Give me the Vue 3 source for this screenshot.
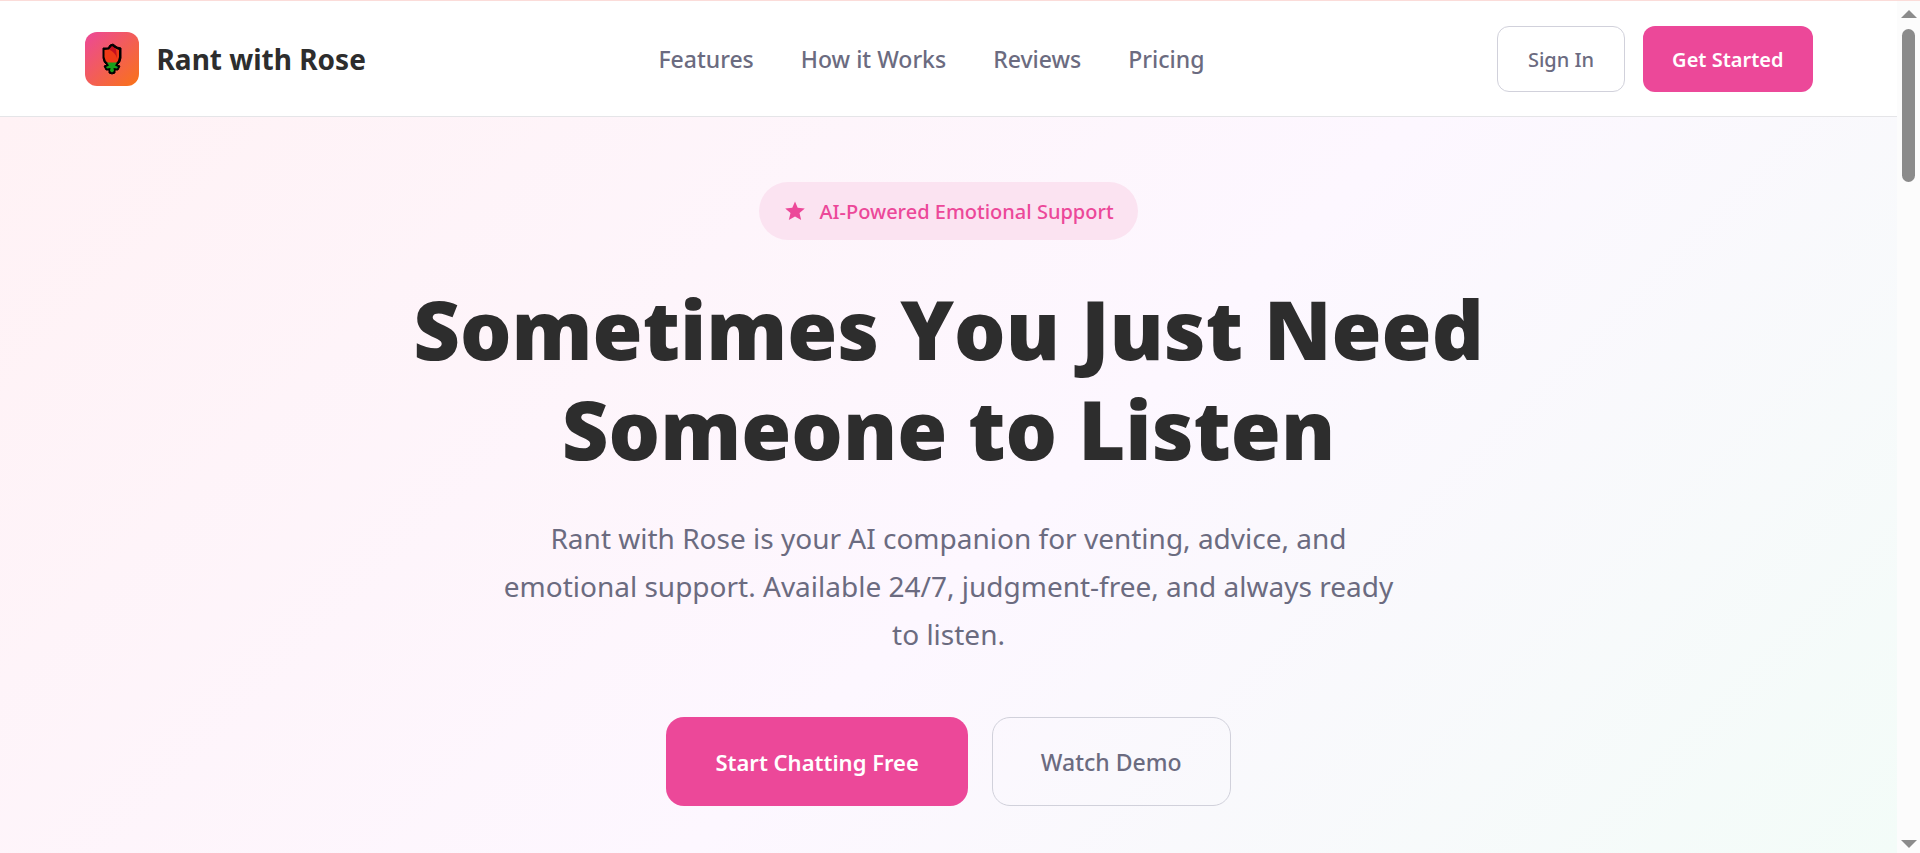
<script setup>
const links = ['Features', 'How it Works', 'Reviews', 'Pricing']
</script>

<template>
  <div class="window">
    <div class="page">
      <header class="header">
        <div class="bar">
          <a class="brand" href="#">
            <span class="logo">
              <svg width="20" height="32" viewBox="0 0 20 32" aria-hidden="true">
                <path d="M1 5 L6 5 L8 2 L11 1 L15 4 L19 5 L19 15 Q18.500 20 15 22 L18 23 L16 27 L13 27 L13 30 L10 31 L7 30 L7 27 L4 27 L2 23 L5 22 Q1.500 20 1 15 Z" fill="#000" stroke="#000" stroke-width="1" stroke-linejoin="round" />
                <path d="M2.500 7 L7 6.500 L10 4 L17 7 L17 14 Q16.500 18 14 20 L6 20 Q3 18 2.500 14 Z" fill="#f03a17" />
                <path d="M7 6.500 L10 3 L14 6 L15 15 Q13 9 7 6.500 Z" fill="#c50f1f" />
                <path d="M5 19.500 L15 19.500 L13 22.500 L16 24 L15 25.500 L11.500 25 L12 28 L10 29.500 L8 28 L8.500 25 L5 25.500 L4 24 L7 22.500 Z" fill="#16a01c" />
              </svg>
            </span>
            <span class="name">Rant with Rose</span>
          </a>
          <nav class="links" aria-label="Main">
            <a v-for="link in links" :key="link" href="#">{{ link }}</a>
          </nav>
          <div class="actions">
            <button class="btn outline" type="button">Sign In</button>
            <button class="btn solid" type="button">Get Started</button>
          </div>
        </div>
      </header>

      <main class="hero">
        <div class="badge">
          <svg width="20" height="20" viewBox="0 0 20 20" aria-hidden="true">
            <path d="M10 0.5 L12.7 6.8 L19.8 7.4 L14.5 12 L16.2 19 L10 15.4 L3.8 19 L5.5 12 L0.2 7.4 L7.3 6.8 Z" fill="#ec4899" />
          </svg>
          <span>AI-Powered Emotional Support</span>
        </div>
        <h1>Sometimes You Just Need Someone to Listen</h1>
        <p>
          Rant with Rose is your AI companion for venting, advice, and
          emotional support. Available 24/7, judgment-free, and always ready to listen.
        </p>
        <div class="cta">
          <button class="btn solid large" type="button">Start Chatting Free</button>
          <button class="btn outline large" type="button">Watch Demo</button>
        </div>
      </main>
    </div>

    <div class="scrollbar" aria-hidden="true">
      <svg width="16" height="8" viewBox="0 0 16 8"><path d="M0 8 L8 0 L16 8 Z" fill="#8b8b8b" /></svg>
      <span class="thumb"></span>
      <svg width="16" height="8" viewBox="0 0 16 8"><path d="M0 0 L8 8 L16 0 Z" fill="#8b8b8b" /></svg>
    </div>
  </div>
</template>

<style>
body {
  margin: 0;
}
</style>

<style scoped>
.window {
  display: flex;
  box-sizing: border-box;
  min-height: 100vh;
  border-top: 1px solid #fbdcd9;
  font-family: "Segoe UI", "Noto Sans", "Open Sans", sans-serif;
  color: #2d2d2d;
}

.page {
  flex: 1;
  display: flex;
  flex-direction: column;
  min-width: 0;
}

.header {
  padding: 25px 48px 24px;
  border-bottom: 1px solid #e5e5e8;
  background: #fff;
}

.bar {
  display: flex;
  align-items: center;
  justify-content: space-between;
  max-width: 1728px;
  margin: 0 auto;
}

.brand {
  display: flex;
  align-items: center;
  gap: 18px;
  color: inherit;
  text-decoration: none;
}

.logo {
  display: flex;
  align-items: center;
  justify-content: center;
  width: 54px;
  height: 54px;
  border-radius: 12px;
  background: linear-gradient(135deg, #ec4899, #f97316);
}

.name {
  font-size: 28px;
  font-weight: 700;
  line-height: 40px;
}

.links {
  display: flex;
  gap: 47px;
}

.links a {
  color: #6b6b80;
  font-size: 23px;
  font-weight: 500;
  line-height: 36px;
  text-decoration: none;
}

.actions {
  display: flex;
  gap: 18px;
}

.btn {
  box-sizing: border-box;
  height: 66px;
  padding: 0 30px;
  border: 1px solid transparent;
  border-radius: 12px;
  font-family: inherit;
  font-size: 20px;
  white-space: nowrap;
}

.solid {
  padding: 0 28px;
  background: #ec4899;
  color: #fff;
  font-weight: 600;
}

.outline {
  border-color: #d1d1db;
  background: transparent;
  color: #6b6b80;
  font-weight: 500;
}

.large {
  height: 89px;
  padding: 0 48px;
  border-radius: 18px;
  font-size: 22px;
}

.outline.large {
  font-size: 23px;
}

.hero {
  flex: 1;
  display: flex;
  flex-direction: column;
  align-items: center;
  padding: 65px 48px 46px;
  background: linear-gradient(135deg, #fff2f5 0%, #fdf7ff 54%, #f3fcf8 100%);
  text-align: center;
}

.badge {
  display: flex;
  align-items: center;
  gap: 14px;
  height: 58px;
  padding: 0 24px 0 26px;
  border-radius: 29px;
  background: #fbe3f1;
  color: #ec4899;
  font-size: 20px;
  font-weight: 500;
}

h1 {
  max-width: 1200px;
  margin: 39px 0 35px;
  font-family: "Segoe UI", "Open Sans", "Noto Sans", sans-serif;
  font-size: 81px;
  font-weight: 800;
  line-height: 100px;
}

p {
  max-width: 900px;
  margin: 0 0 59px;
  color: #6b6b80;
  font-size: 28px;
  line-height: 48px;
}

.cta {
  display: flex;
  gap: 24px;
}

.scrollbar {
  display: flex;
  flex-direction: column;
  align-items: center;
  box-sizing: border-box;
  width: 23px;
  padding: 9px 0 5px;
  background: #fcfcfc;
}

.thumb {
  width: 13px;
  height: 153px;
  margin: 11px 0 auto;
  border-radius: 7px;
  background: #8b8b8b;
}
</style>
